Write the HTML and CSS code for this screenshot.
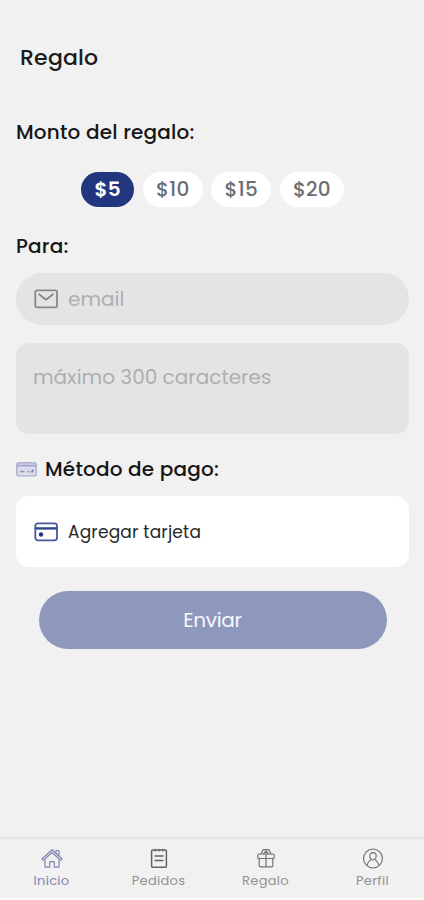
FILE: index.html
```html
<!DOCTYPE html>
<html lang="es">
<head>
  <meta charset="UTF-8" />
  <meta name="viewport" content="width=device-width, initial-scale=1.0"/>
  <title>Regalo</title>
  <link rel="stylesheet" href="styles.css">
</head>
<body>
  <main class="container">
    <h1>Regalo</h1>

    <h2 class="monto-title">Monto del regalo:</h2>
    <div class="montos">
      <button type="button" class="monto active">$5</button>
      <button type="button" class="monto">$10</button>
      <button type="button" class="monto">$15</button>
      <button type="button" class="monto">$20</button>
    </div>

    <h2 class="para-title">Para:</h2>
    <div class="email-box">
      <svg width="24" height="20" viewBox="0 0 24 20" fill="none" stroke="#85888b" stroke-width="1.8" stroke-linecap="round" stroke-linejoin="round">
        <rect x="1.3" y="1.3" width="21.7" height="17" rx="1.6"/>
        <path d="M5 5.3l7 5.4 7-5.4"/>
      </svg>
      <input type="email" class="email" placeholder="email" />
    </div>
    <textarea class="mensaje" maxlength="300" placeholder="máximo 300 caracteres"></textarea>

    <h2 class="pago-title">
      <svg width="21" height="15" viewBox="0 0 21 15" fill="none" stroke="#9fa3ca" stroke-width="1.2">
        <rect x="0.8" y="0.8" width="19.4" height="13.2" rx="1.8" fill="#dcddeb"/>
        <path d="M1 3.6h19" stroke-width="1.8"/>
        <path d="M4 9.5h4.500M11.5 9.5h2" stroke="#9094b5" stroke-width="1.5"/>
        <path d="M15.5 10.5l1.8-2.8" stroke="#787c9c" stroke-width="1.7"/>
      </svg>
      <span>Método de pago:</span>
    </h2>
    <button type="button" class="tarjeta">
      <svg width="24" height="20" viewBox="0 0 24 20" fill="none" stroke="#465a9b" stroke-width="1.8">
        <rect x="1.3" y="1.3" width="21.7" height="17" rx="2.5"/>
        <path d="M1 6.4h22" stroke="#30468e" stroke-width="2.4"/>
        <circle cx="7" cy="12.5" r="2.2" fill="#203580" stroke="none"/>
      </svg>
      <span>Agregar tarjeta</span>
    </button>

    <button type="button" class="btn">Enviar</button>
  </main>

  <nav class="menu">
    <a class="menu-item active">
      <svg width="22" height="20" viewBox="0 0 22 20" fill="none" stroke="currentColor" stroke-width="1.2" stroke-linejoin="round">
        <path d="M1 10.5L11 1.2l10 9.3-1.4 1.4L11 4 2.4 11.9z"/>
        <path d="M15 4.8V2h3v5.6"/>
        <path d="M4 11v7.6h4.8v-5.4h4.4v5.4H18V11"/>
      </svg>
      <span>Inicio</span>
    </a>
    <a class="menu-item">
      <svg width="22" height="20" viewBox="0 0 22 20" fill="none" stroke="#626262" stroke-width="1.5">
        <rect x="3.6" y="1.6" width="14.8" height="17.2" rx="1"/>
        <path d="M7.2 .3v2.8M11 .3v2.8M14.8 .3v2.8" stroke-width="1"/>
        <path d="M6.5 7.5h9M6.5 12h9"/>
      </svg>
      <span>Pedidos</span>
    </a>
    <a class="menu-item">
      <svg width="22" height="20" viewBox="0 0 22 20" fill="none" stroke="#737373" stroke-width="1.2" stroke-linejoin="round">
        <rect x="2.8" y="5.5" width="16.4" height="4.5" rx="1"/>
        <path d="M4.2 10v7q0 1.4 1.4 1.4h10.8q1.4 0 1.4-1.4v-7M11 5.5v12.9"/>
        <path d="M6 5.5l2-4.300h6l2 4.300M8.500 5.500L11 2.500l2.500 3"/>
      </svg>
      <span>Regalo</span>
    </a>
    <a class="menu-item">
      <svg width="22" height="22" viewBox="0 0 22 22" fill="none" stroke="#707070" stroke-width="1.2">
        <circle cx="11" cy="11" r="9.9"/>
        <path d="M7.6 8.2a3.4 3.4 0 0 1 6.8 0c0 2.3-1.5 4.3-3.4 4.3s-3.4-2-3.4-4.3z"/>
        <path d="M4.8 18c.6-2.800 1.800-4 3.800-5.800M17.200 18c-.6-2.800-1.800-4-3.800-5.800"/>
      </svg>
      <span>Perfil</span>
    </a>
  </nav>
</body>
</html>
```
FILE: styles.css
```css
* {
  margin: 0;
  padding: 0;
  box-sizing: border-box;
  font-family: Poppins, Inter, sans-serif;
}

body {
  background-color: #f1f1f1;
  display: flex;
  flex-direction: column;
  height: 100vh;
  border-bottom: 2px solid #fafafa;
}

.container {
  flex: 1;
  padding: 43px 15px 0 16px;
}

svg {
  display: block;
  flex-shrink: 0;
}

button {
  border: none;
  cursor: pointer;
}

h1 {
  padding-left: 4px;
  font-size: 22px;
  line-height: 30px;
  font-weight: 500;
  letter-spacing: 0.2px;
  color: #1c1c1c;
}

h2 {
  font-size: 20px;
  line-height: 30px;
  font-weight: 500;
  letter-spacing: 0.2px;
  color: #161616;
}

.monto-title {
  margin-top: 44px;
}

.montos {
  display: flex;
  justify-content: center;
  gap: 8.6px;
  margin-top: 25px;
}

.monto {
  width: 60px;
  height: 35px;
  padding-bottom: 2px;
  border-radius: 18px;
  background: white;
  color: #6b6d74;
  font-size: 20px;
  font-weight: 500;
  letter-spacing: 0.2px;
}

.monto.active {
  width: 53px;
  background: #22367f;
  color: white;
  font-weight: 600;
}

.monto:last-child {
  width: 64px;
}

.para-title {
  margin-top: 24px;
}

.email-box {
  display: flex;
  align-items: center;
  gap: 10px;
  height: 52px;
  margin-top: 12px;
  padding: 0 18px;
  border-radius: 26px;
  background: #e4e4e4;
}

.email {
  flex: 1;
  min-width: 0;
  border: none;
  outline: none;
  background: transparent;
  font-size: 20px;
}

.mensaje {
  display: block;
  width: 100%;
  height: 91px;
  margin-top: 18px;
  padding: 19px 17px;
  border: none;
  border-radius: 13px;
  outline: none;
  resize: none;
  background: #e4e4e4;
  font-size: 20px;
  line-height: 30px;
}

.email::placeholder,
.mensaje::placeholder {
  color: #acafb1;
}

.pago-title {
  display: flex;
  align-items: center;
  gap: 8px;
  margin-top: 20px;
}

.tarjeta {
  display: flex;
  align-items: center;
  gap: 10px;
  width: 100%;
  height: 71px;
  margin-top: 12px;
  padding: 0 18px;
  border-radius: 13px;
  background: white;
  color: #292929;
  font-size: 17px;
  letter-spacing: 0.2px;
}

.btn {
  display: block;
  width: 348px;
  height: 58px;
  margin: 24px auto 0;
  border-radius: 29px;
  background: #8d98bc;
  color: #f8f9ff;
  font-size: 20px;
  letter-spacing: -0.3px;
}

.menu {
  display: grid;
  grid-template-columns: repeat(4, 107px);
  justify-content: center;
  height: 61px;
  border-top: 2px solid #e5e5e5;
}

.menu-item {
  display: flex;
  flex-direction: column;
  align-items: center;
  padding-top: 9px;
  color: #929292;
  font-size: 13px;
  line-height: 18px;
  letter-spacing: 0.3px;
}

.menu-item svg {
  height: 21px;
  margin-bottom: 3px;
}

.menu-item.active {
  color: #7e85b3;
}
```
